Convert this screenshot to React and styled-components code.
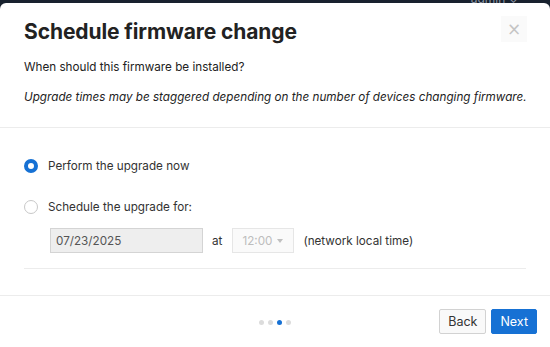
import React from "react";
import styled, { createGlobalStyle } from "styled-components";

const Global = createGlobalStyle`
  html, body { margin: 0; padding: 0; }
  body {
    background: #18212e;
    font-family: Inter, "Noto Sans", sans-serif;
    width: 550px;
    height: 347px;
    overflow: hidden;
  }
`;

const Backdrop = styled.div`
  position: relative;
  width: 550px;
  height: 347px;
  padding-top: 3px;
  box-sizing: border-box;
`;

const TopBarText = styled.div`
  position: absolute;
  top: -9px;
  right: 32px;
  color: #8a94a3;
  font-size: 12px;
`;

const Modal = styled.div`
  background: #fff;
  border-radius: 6px 6px 0 0;
  height: 344px;
  display: flex;
  flex-direction: column;
`;

const Header = styled.div`
  display: flex;
  justify-content: space-between;
  align-items: center;
  height: 27px;
  padding: 15px 23px 0 24px;
`;

const Title = styled.h1`
  margin: 0;
  font-size: 21px;
  line-height: 27px;
  font-weight: 700;
  color: #222;
  letter-spacing: -0.1px;
`;

const Close = styled.button`
  border: none;
  background: #fafafa;
  color: #c4c4c4;
  width: 26px;
  height: 26px;
  margin-top: -6px;
  font-size: 17px;
  line-height: 26px;
  padding: 0;
  font-family: "DejaVu Sans", sans-serif;
`;

const Intro = styled.div`
  padding: 0 24px;
  font-size: 11.7px;
  color: #222;
`;

const Para = styled.p`
  margin: ${(p) => p.$mt}px 0 0;
  font-style: ${(p) => (p.$italic ? "italic" : "normal")};
  line-height: 16px;
  white-space: nowrap;
`;

const Divider = styled.hr`
  border: none;
  border-top: 1px solid #ececec;
  margin: ${(p) => p.$mt}px ${(p) => p.$inset}px 0;
`;

const Body = styled.div`
  padding: 30px 24px 0 24px;
  font-size: 11.7px;
  color: #333;
`;

const Option = styled.label`
  display: flex;
  align-items: center;
  gap: 10px;
  height: 16px;
  margin-bottom: ${(p) => p.$mb}px;
`;

const Radio = styled.span`
  width: 14px;
  height: 14px;
  border-radius: 50%;
  box-sizing: border-box;
  border: ${(p) => (p.$on ? "4px solid #1671d4" : "1px solid #c8c8c8")};
  background: #fff;
  flex: none;
`;

const ScheduleRow = styled.div`
  display: flex;
  align-items: center;
  margin: 13px 0 0 26px;
  color: #333;
`;

const DateInput = styled.div`
  width: 153px;
  height: 25px;
  box-sizing: border-box;
  border: 1px solid #d4d4d4;
  background: #eeeeee;
  color: #555;
  padding: 0 5px;
  display: flex;
  align-items: center;
`;

const At = styled.span`
  margin: 0 10px 0 9px;
`;

const TimeSelect = styled.div`
  width: 62px;
  height: 25px;
  box-sizing: border-box;
  border: 1px solid #e6e6e6;
  background: #fafafa;
  color: #bdbdbd;
  display: flex;
  align-items: center;
  padding: 0 9px;
  gap: 5px;
`;

const Caret = styled.span`
  width: 0;
  height: 0;
  border-left: 3.5px solid transparent;
  border-right: 3.5px solid transparent;
  border-top: 4px solid #c0c0c0;
`;

const Note = styled.span`
  margin-left: 9px;
`;

const Footer = styled.div`
  position: relative;
  display: flex;
  justify-content: flex-end;
  align-items: center;
  gap: 5px;
  padding: 13px 13px 0;
`;

const Dots = styled.div`
  position: absolute;
  left: 259px;
  top: 24px;
  display: flex;
  gap: 4px;
`;

const Dot = styled.span`
  width: 5px;
  height: 5px;
  border-radius: 50%;
  background: ${(p) => (p.$on ? "#1671d4" : "#dcdcdc")};
`;

const Button = styled.button`
  height: 25px;
  padding: 0 8px;
  border-radius: 2px;
  font-family: Inter, "Noto Sans", sans-serif;
  font-size: 12.5px;
  border: 1px solid ${(p) => (p.$primary ? "#1671d4" : "#d2d2d2")};
  background: ${(p) => (p.$primary ? "#1671d4" : "#f9f9f9")};
  color: ${(p) => (p.$primary ? "#fff" : "#333")};
`;

export default function App() {
  return (
    <>
      <Global />
      <Backdrop>
        <TopBarText>admin ⌄</TopBarText>
        <Modal>
          <Header>
            <Title>Schedule firmware change</Title>
            <Close aria-label="Close">×</Close>
          </Header>
          <Intro>
            <Para $mt={14}>When should this firmware be installed?</Para>
            <Para $mt={14} $italic>
              Upgrade times may be staggered depending on the number of devices
              changing firmware.
            </Para>
          </Intro>
          <Divider $mt={22} $inset={0} />
          <Body>
            <Option $mb={25}>
              <Radio $on />
              Perform the upgrade now
            </Option>
            <Option $mb={0}>
              <Radio />
              Schedule the upgrade for:
            </Option>
            <ScheduleRow>
              <DateInput>07/23/2025</DateInput>
              <At>at</At>
              <TimeSelect>
                12:00 <Caret />
              </TimeSelect>
              <Note>(network local time)</Note>
            </ScheduleRow>
          </Body>
          <Divider $mt={15} $inset={24} />
          <Divider $mt={26} $inset={0} />
          <Footer>
            <Dots>
              <Dot />
              <Dot />
              <Dot $on />
              <Dot />
            </Dots>
            <Button>Back</Button>
            <Button $primary>Next</Button>
          </Footer>
        </Modal>
      </Backdrop>
    </>
  );
}
